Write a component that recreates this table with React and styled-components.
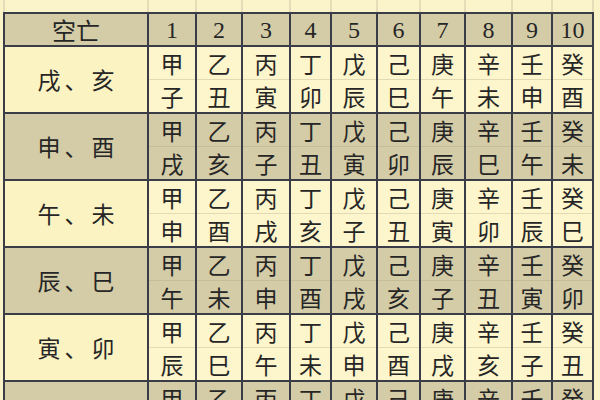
import React from 'react'
import styled, { createGlobalStyle } from 'styled-components';

const GlobalStyle = createGlobalStyle`
    html, body {
        margin: 0;
        padding: 0;
        background: #faf3c8;
        overflow: hidden;
    }
`;

const COLS = '142px 46px 44px 46px 39px 44px 41px 43px 45px 38px 39px';

const stems = ['甲', '乙', '丙', '丁', '戊', '己', '庚', '辛', '壬', '癸'];

const bands = [
    { label: '戌、亥', branches: ['子', '丑', '寅', '卯', '辰', '巳', '午', '未', '申', '酉'] },
    { label: '申、酉', branches: ['戌', '亥', '子', '丑', '寅', '卯', '辰', '巳', '午', '未'] },
    { label: '午、未', branches: ['申', '酉', '戌', '亥', '子', '丑', '寅', '卯', '辰', '巳'] },
    { label: '辰、巳', branches: ['午', '未', '申', '酉', '戌', '亥', '子', '丑', '寅', '卯'] },
    { label: '寅、卯', branches: ['辰', '巳', '午', '未', '申', '酉', '戌', '亥', '子', '丑'] },
    { label: '子、丑', branches: ['寅', '卯', '辰', '巳', '午', '未', '申', '酉', '戌', '亥'] },
];

function App() {
    return (
        <Page>
            <GlobalStyle />
            <TopStrip>
                {Array.from({ length: 11 }).map((_, i) => <StripCell key={i} />)}
            </TopStrip>
            <Table>
                <HeadCell className='label'>空亡</HeadCell>
                {stems.map((_, i) => <HeadCell key={i}>{i + 1}</HeadCell>)}

                {bands.map((band, b) => {
                    const dark = b % 2 === 1;
                    return (
                        <React.Fragment key={band.label}>
                            <LabelCell $dark={dark}>{band.label}</LabelCell>
                            {stems.map((stem, i) => (
                                <PairCell key={i} $dark={dark}>
                                    <Half $dark={dark} $top>{stem}</Half>
                                    <Half $dark={dark}>{band.branches[i]}</Half>
                                </PairCell>
                            ))}
                        </React.Fragment>
                    )
                })}
            </Table>
        </Page>
    )
}

const Page = styled.div`
    width: 600px;
    height: 400px;
    overflow: hidden;
    padding-left: 3px;
    box-sizing: border-box;
    background: #faf3c8;
`;

const TopStrip = styled.div`
    display: grid;
    grid-template-columns: ${COLS};
    column-gap: 2px;
    padding: 0 2px;
    height: 12px;
    width: fit-content;
    background: #e4ddb8;
`;

const StripCell = styled.div`
    background: #fbf4cb;
`;

const Table = styled.div`
    display: grid;
    grid-template-columns: ${COLS};
    grid-template-rows: 31px;
    grid-auto-rows: 65px;
    gap: 2px;
    padding: 2px;
    width: fit-content;
    background: #3a3c48;
    color: #262626;
    font-family: "Noto Sans CJK SC", "Noto Sans", sans-serif;
`;

const HeadCell = styled.div`
    background: #d4cca7;
    display: flex;
    align-items: center;
    justify-content: center;
    font-family: "Liberation Serif", "Noto Sans CJK SC", serif;
    font-size: 24px;
    line-height: 1;
    &.label {
        font-family: "Noto Sans CJK SC", sans-serif;
        font-size: 24px;
    }
`;

const LabelCell = styled.div`
    background: ${p => p.$dark ? '#d4cca7' : '#fcf3c2'};
    display: flex;
    align-items: center;
    justify-content: center;
    font-size: 23px;
    letter-spacing: 4px;
    padding-left: 4px;
    line-height: 1;
`;

const PairCell = styled.div`
    background: ${p => p.$dark ? '#d4cca7' : '#fdf5cb'};
    display: flex;
    flex-direction: column;
`;

const Half = styled.div`
    flex: 1;
    display: flex;
    align-items: center;
    justify-content: center;
    font-size: 23px;
    line-height: 1;
    border-bottom: ${p => p.$top ? `1px solid ${p.$dark ? '#c4bd98' : '#e2dab4'}` : 'none'};
`;

export default App;
